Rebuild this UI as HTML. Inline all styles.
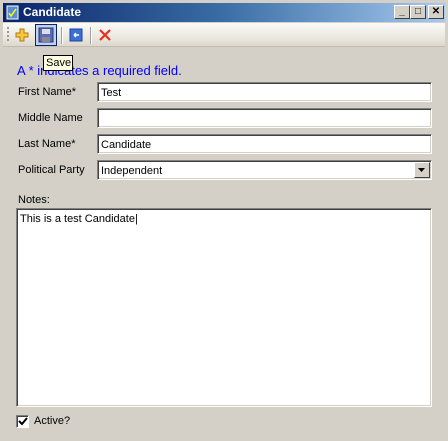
<!DOCTYPE html>
<html><head><meta charset="utf-8"><style>
*{margin:0;padding:0;box-sizing:border-box}
body{width:448px;height:441px;background:#d4d0c8;position:relative;overflow:hidden;font-family:"Liberation Sans",Arial,sans-serif;font-size:11px;color:#000}
.abs{position:absolute}
.title{left:3px;top:3px;width:442px;height:19px;background:linear-gradient(to right,#0a246a,#3a6ea5 50%,#a6caf0)}
.title span{position:absolute;left:20px;top:2px;color:#fff;font-weight:bold;font-size:12px}
.cb{position:absolute;top:2px;width:16px;height:14px;background:#d4d0c8;border:1px solid;border-color:#fff #404040 #404040 #fff;font-size:10px;font-weight:bold;text-align:center;line-height:12px}
.tool{left:3px;top:23px;width:442px;height:24px;background:linear-gradient(#fafaf8,#ece9e0 60%,#dcd8cc);border-bottom:1px solid #c0bcb2}
.inp{position:absolute;left:97px;width:335px;height:20px;background:#fff;border:1px solid;border-color:#808080 #fff #fff #808080;box-shadow:inset 1px 1px 0 #404040, inset -1px -1px 0 #d4d0c8;padding:4px 0 0 3px;font-size:11px}
.lbl{position:absolute;left:18px;font-size:11px}
</style></head><body>
<div class="abs title">
 <svg class="abs" style="left:3px;top:2px" width="14" height="15"><rect x="1" y="1" width="11" height="13" fill="#5a8ed0" stroke="#fff" stroke-width="1"/><path d="M3 8l2 3 5-7" stroke="#ff0" fill="none" stroke-width="1.5"/></svg>
 <span>Candidate</span>
 <div class="cb" style="left:391px">_</div>
 <div class="cb" style="left:407px">□</div>
 <div class="cb" style="left:425px">✕</div>
</div>
<div class="abs tool">
 <div class="abs" style="left:4px;top:4px;width:2px;height:16px;background:repeating-linear-gradient(#999 0 2px,transparent 2px 4px)"></div>
 <svg class="abs" style="left:11px;top:4px" width="16" height="16"><path d="M6 2h4v4h4v4h-4v4H6v-4H2V6h4z" fill="#f8c838" stroke="#b07818"/></svg>
 <div class="abs" style="left:32px;top:1px;width:22px;height:22px;border:1px solid #0a246a;background:#c1d2ee"></div>
 <svg class="abs" style="left:35px;top:4px" width="16" height="16"><rect x="1" y="1" width="14" height="14" fill="#5c6cb0" stroke="#2a3470"/><rect x="4" y="2" width="8" height="5" fill="#dde"/><rect x="4" y="10" width="8" height="5" fill="#889"/></svg>
 <div class="abs" style="left:58px;top:4px;width:1px;height:17px;background:#a0a0a0;box-shadow:1px 0 #fff"></div>
 <svg class="abs" style="left:66px;top:5px" width="14" height="14"><rect x="1" y="1" width="12" height="12" fill="#3a70d8" stroke="#1a40a0"/><path d="M5 7h5M5 7l2-2M5 7l2 2" stroke="#fff" stroke-width="1.5" fill="none"/></svg>
 <div class="abs" style="left:87px;top:4px;width:1px;height:17px;background:#a0a0a0;box-shadow:1px 0 #fff"></div>
 <svg class="abs" style="left:94px;top:4px" width="16" height="16"><path d="M3 3l10 10M13 3L3 13" stroke="#e83020" stroke-width="2.2"/></svg>
</div>
<div class="abs" style="left:17px;top:63px;color:#0000ff;font-size:13px">A * indicates a required field.</div>
<div class="abs" style="left:43px;top:55px;width:30px;height:16px;background:#ffffe1;border:1px solid #000;font-size:11px;padding:1px 0 0 2px">Save</div>
<div class="lbl" style="top:86px">First Name*</div>
<div class="inp" style="top:82px">Test</div>
<div class="lbl" style="top:112px">Middle Name</div>
<div class="inp" style="top:108px"></div>
<div class="lbl" style="top:138px">Last Name*</div>
<div class="inp" style="top:134px">Candidate</div>
<div class="lbl" style="top:164px">Political Party</div>
<div class="inp" style="top:160px">Independent
 <div class="abs" style="right:1px;top:1px;width:16px;height:16px;background:#d4d0c8;border:1px solid;border-color:#fff #404040 #404040 #fff"><svg width="14" height="14"><path d="M3 5h7l-3.5 4z" fill="#000"/></svg></div>
</div>
<div class="lbl" style="top:194px">Notes:</div>
<div class="inp" style="left:16px;top:208px;width:416px;height:199px;padding:4px 0 0 3px">This is a test Candidate|</div>
<div class="abs" style="left:16px;top:415px;width:13px;height:13px;background:#fff;border:1px solid;border-color:#808080 #fff #fff #808080;box-shadow:inset 1px 1px 0 #404040"><svg class="abs" style="left:1px;top:1px" width="10" height="10"><path d="M1 4l3 3 5-6" stroke="#000" stroke-width="2" fill="none"/></svg></div>
<div class="abs" style="left:34px;top:415px">Active?</div>
</body></html>
